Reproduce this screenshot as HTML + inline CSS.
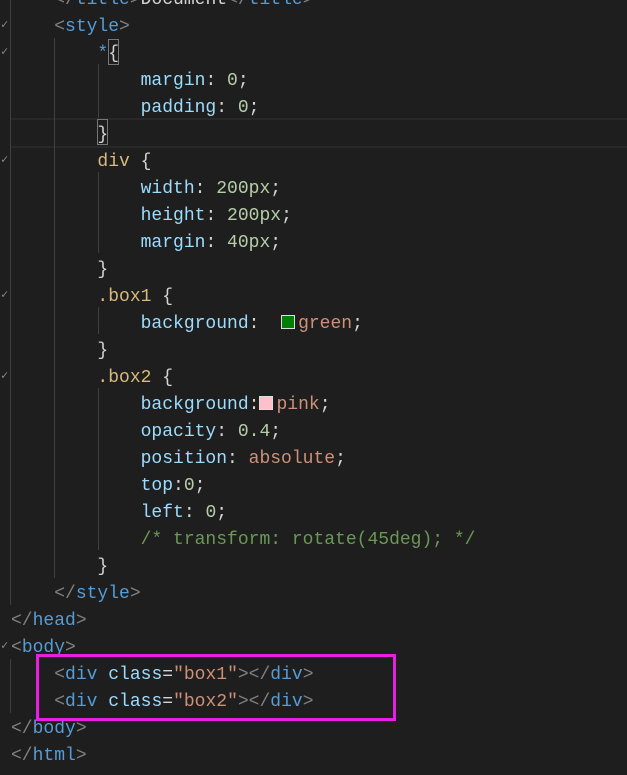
<!DOCTYPE html>
<html><head><style>
body{margin:0;width:627px;height:775px;background:#1e1e1e;overflow:hidden;position:relative;font-family:"Liberation Mono",monospace;font-size:18px}
.c{position:absolute;left:11px;top:-13px;white-space:pre;line-height:27px;color:#d4d4d4}
.t{color:#569cd6}.b{color:#808080}.p{color:#9cdcfe}.n{color:#b5cea8}.s{color:#ce9178}.y{color:#d7ba7d}.g{color:#6a9955}
.g1{position:absolute;width:1px;background:#404040}
.ck{position:absolute;left:1px;color:#888;font-size:12px}
.sw{display:inline-block;width:12px;height:12px;border:1px solid #ddd;vertical-align:-1px;margin:0 3px 0 0}
</style></head><body>
<div style="position:absolute;left:10px;right:0;top:118px;height:26px;border-top:2px solid #282828;border-bottom:2px solid #282828"></div>
<div class="g1" style="left:10px;top:0;height:605px"></div>
<div class="g1" style="left:10px;top:659px;height:54px"></div>
<div class="g1" style="left:54px;top:38px;height:540px"></div>
<div class="g1" style="left:98px;top:64px;height:54px"></div>
<div class="g1" style="left:98px;top:172px;height:81px"></div>
<div class="g1" style="left:98px;top:307px;height:27px"></div>
<div class="g1" style="left:98px;top:388px;height:162px"></div>
<div style="position:absolute;left:108px;top:39px;width:9px;height:24px;border:1px solid #777"></div>
<div style="position:absolute;left:97px;top:119px;width:9px;height:24px;border:1px solid #777"></div>
<div class="ck" style="top:17px">✓</div><div class="ck" style="top:44px">✓</div><div class="ck" style="top:152px">✓</div><div class="ck" style="top:287px">✓</div><div class="ck" style="top:368px">✓</div><div class="ck" style="top:638px">✓</div>
<div class="c"><span class="b">    &lt;/</span><span class="t">title</span><span class="b">&gt;</span>Document<span class="b">&lt;/</span><span class="t">title</span><span class="b">&gt;</span>
<span class="b">    &lt;</span><span class="t">style</span><span class="b">&gt;</span>
        <span class="t">*</span>{
            <span class="p">margin</span>: <span class="n">0</span>;
            <span class="p">padding</span>: <span class="n">0</span>;
        }
        <span class="y">div</span> {
            <span class="p">width</span>: <span class="n">200px</span>;
            <span class="p">height</span>: <span class="n">200px</span>;
            <span class="p">margin</span>: <span class="n">40px</span>;
        }
        <span class="y">.box1</span> {
            <span class="p">background</span>:  <span class="sw" style="background:green"></span><span class="s">green</span>;
        }
        <span class="y">.box2</span> {
            <span class="p">background</span>:<span class="sw" style="background:pink"></span><span class="s">pink</span>;
            <span class="p">opacity</span>: <span class="n">0.4</span>;
            <span class="p">position</span>: <span class="s">absolute</span>;
            <span class="p">top</span>:<span class="n">0</span>;
            <span class="p">left</span>: <span class="n">0</span>;
            <span class="g">/* transform: rotate(45deg); */</span>
        }
<span class="b">    &lt;/</span><span class="t">style</span><span class="b">&gt;</span>
<span class="b">&lt;/</span><span class="t">head</span><span class="b">&gt;</span>
<span class="b">&lt;</span><span class="t">body</span><span class="b">&gt;</span>
<span class="b">    &lt;</span><span class="t">div</span> <span class="p">class</span>=<span class="s">"box1"</span><span class="b">&gt;&lt;/</span><span class="t">div</span><span class="b">&gt;</span>
<span class="b">    &lt;</span><span class="t">div</span> <span class="p">class</span>=<span class="s">"box2"</span><span class="b">&gt;&lt;/</span><span class="t">div</span><span class="b">&gt;</span>
<span class="b">&lt;/</span><span class="t">body</span><span class="b">&gt;</span>
<span class="b">&lt;/</span><span class="t">html</span><span class="b">&gt;</span></div>
<div style="position:absolute;left:36px;top:654px;width:354px;height:61px;border:3px solid #e81ee0"></div>
</body></html>
